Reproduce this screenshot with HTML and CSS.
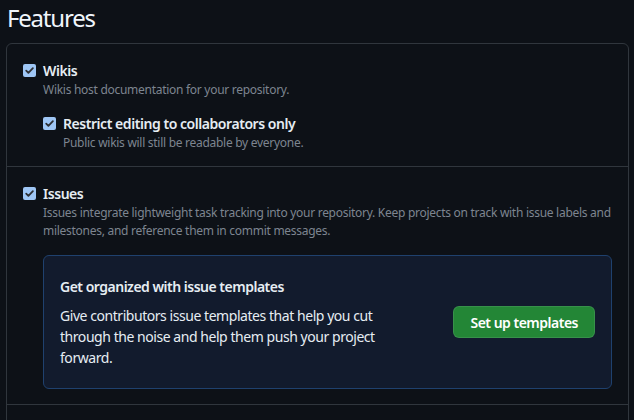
FILE: index.html
```html
<!DOCTYPE html>
<html lang="en">
<head>
<meta charset="utf-8">
<title>Features</title>
<link rel="stylesheet" href="styles.css">
</head>
<body>
<h2 class="title">Features</h2>
<div class="box">
  <section class="row">
    <div class="item">
      <span class="check"><svg viewBox="0 0 13 13" width="13" height="13"><path d="M3.2 6.6 L5.4 8.8 L9.9 4.2" fill="none" stroke="#2d2f33" stroke-width="1.8" stroke-linecap="round" stroke-linejoin="round"/></svg></span>
      <div class="item-body">
        <div class="label">Wikis</div>
        <p class="note">Wikis host documentation for your repository.</p>
      </div>
    </div>
    <div class="item nested">
      <span class="check"><svg viewBox="0 0 13 13" width="13" height="13"><path d="M3.2 6.6 L5.4 8.8 L9.9 4.2" fill="none" stroke="#2d2f33" stroke-width="1.8" stroke-linecap="round" stroke-linejoin="round"/></svg></span>
      <div class="item-body">
        <div class="label">Restrict editing to collaborators only</div>
        <p class="note">Public wikis will still be readable by everyone.</p>
      </div>
    </div>
  </section>
  <section class="row">
    <div class="item">
      <span class="check"><svg viewBox="0 0 13 13" width="13" height="13"><path d="M3.2 6.6 L5.4 8.8 L9.9 4.2" fill="none" stroke="#2d2f33" stroke-width="1.8" stroke-linecap="round" stroke-linejoin="round"/></svg></span>
      <div class="item-body">
        <div class="label">Issues</div>
        <p class="note">Issues integrate lightweight task tracking into your repository. Keep projects on track with issue labels and milestones, and reference them in commit messages.</p>
      </div>
    </div>
    <div class="promo">
      <div class="promo-text">
        <h3 class="promo-title">Get organized with issue templates</h3>
        <p class="promo-desc">Give contributors issue templates that help you cut through the noise and help them push your project forward.</p>
      </div>
      <button class="btn" type="button">Set up templates</button>
    </div>
  </section>
  <section class="row row-empty"></section>
</div>
</body>
</html>
```
FILE: styles.css
```css
html, body {
  background: #0d1117;
}
body {
  margin: 0;
  padding: 0 5px 0 6px;
  color: #e6edf3;
  font-family: "Noto Sans", "Open Sans", sans-serif;
  font-size: 14px;
}
.title {
  margin: 0;
  padding: 3px 0 10px 1px;
  font-size: 24px;
  font-weight: 400;
  line-height: 30px;
  letter-spacing: -1.2px;
  color: #f0f6fc;
}
.box {
  border: 1px solid #30363d;
  border-radius: 6px;
}
.row {
  padding: 16px 16px 14px;
  border-bottom: 1px solid #30363d;
}
.row + .row {
  padding-top: 16px;
  padding-bottom: 15px;
}
.row-empty {
  height: 40px;
  border-bottom: 0;
}
.item {
  display: flex;
  gap: 7px;
}
.nested {
  margin: 14px 0 0 20px;
}
.check {
  flex: none;
  width: 13px;
  height: 13px;
  margin-top: 4px;
  border-radius: 2px;
  background: #9ec6f5;
  display: flex;
}
.item-body {
  flex: 1;
  min-width: 0;
}
.label {
  font-weight: 600;
  line-height: 21px;
  font-size: 14px;
  letter-spacing: -0.45px;
}
.note {
  margin: 0;
  font-size: 12px;
  line-height: 18px;
  letter-spacing: -0.28px;
  color: #7d8590;
}
.promo {
  margin: 15px 0 0 20px;
  padding: 20px 16px;
  border: 1px solid #1f416e;
  border-radius: 6px;
  background: #121b2d;
  display: flex;
  align-items: center;
  justify-content: space-between;
}
.promo-text {
  width: 335px;
}
.promo-title {
  margin: 0 0 8px;
  font-size: 14px;
  font-weight: 600;
  line-height: 21px;
  letter-spacing: -0.5px;
}
.promo-desc {
  margin: 0;
  font-size: 14px;
  line-height: 21px;
  letter-spacing: -0.45px;
}
.btn {
  flex: none;
  height: 32px;
  padding: 0 16px;
  border: 1px solid rgba(240, 246, 252, 0.1);
  border-radius: 6px;
  background: #238636;
  color: #ffffff;
  font-family: inherit;
  font-size: 14px;
  font-weight: 600;
  letter-spacing: -0.5px;
}
```
